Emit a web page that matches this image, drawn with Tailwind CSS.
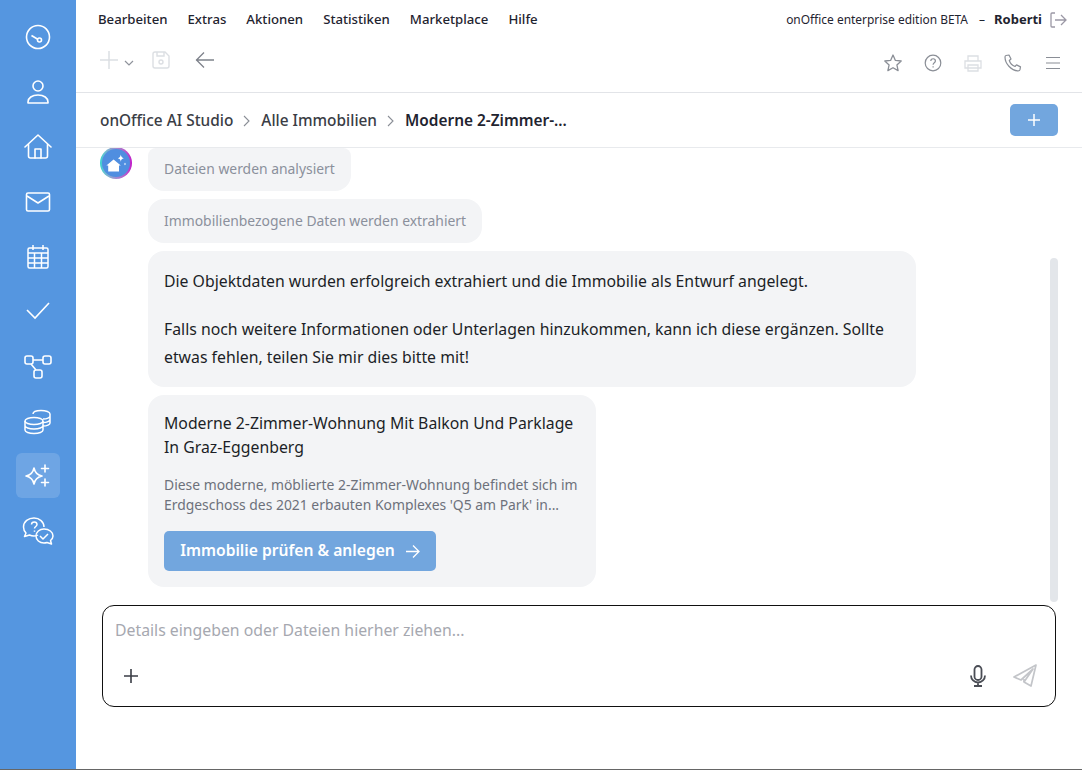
<!DOCTYPE html>
<html lang="de">
<head>
  <meta charset="UTF-8">
  <meta name="viewport" content="width=device-width, initial-scale=1.0">
  <title>onOffice AI Studio</title>
  <script src="https://cdn.jsdelivr.net/npm/@tailwindcss/browser@4"></script>
</head>
<body class="bg-white font-['Noto_Sans',sans-serif] text-[#1f2430] overflow-hidden">
  <div class="flex h-[770px] w-[1082px] border-b border-[#666]">
    <!-- sidebar -->
    <nav class="w-[76px] shrink-0 bg-[#5596e0] flex flex-col items-center pt-[15px] text-white">
      <div class="w-11 h-11 flex items-center justify-center mb-[11px]">
        <svg class="w-7 h-7" viewBox="0 0 28 28" fill="none" stroke="currentColor" stroke-width="1.6"><circle cx="14" cy="14" r="11.5"/><circle cx="15.5" cy="17" r="2"/><path d="M13.7 16.2 7.5 12.5"/></svg>
      </div>
      <div class="w-11 h-11 flex items-center justify-center mb-[11px]">
        <svg class="w-7 h-7" viewBox="0 0 28 28" fill="none" stroke="currentColor" stroke-width="1.6"><circle cx="14" cy="8" r="5"/><path d="M4 25v-1c0-4 4-7 10-7s10 3 10 7v1z" stroke-linejoin="round"/></svg>
      </div>
      <div class="w-11 h-11 flex items-center justify-center mb-[11px]">
        <svg class="w-7 h-7" viewBox="0 0 28 28" fill="none" stroke="currentColor" stroke-width="1.6" stroke-linejoin="round" stroke-linecap="round"><path d="M1 14 14 2l13 12"/><path d="M4.500 11.500V23a2 2 0 0 0 2 2h15a2 2 0 0 0 2-2V11.500"/><path d="M11 25v-9h6v9"/></svg>
      </div>
      <div class="w-11 h-11 flex items-center justify-center mb-[11px]">
        <svg class="w-7 h-7" viewBox="0 0 28 28" fill="none" stroke="currentColor" stroke-width="1.6" stroke-linejoin="round"><rect x="2.500" y="5" width="23" height="18" rx="1.500"/><path d="m3 8 11 7 11-7"/></svg>
      </div>
      <div class="w-11 h-11 flex items-center justify-center mb-[11px]">
        <svg class="w-7 h-7" viewBox="0 0 28 28" fill="none" stroke="currentColor" stroke-width="1.5"><rect x="4" y="5" width="20" height="20" rx="1.500"/><path d="M9 2v5M19 2v5M4 10h20M4 15h20M4 20h20M10.500 10v15M17.500 10v15"/></svg>
      </div>
      <div class="w-11 h-11 flex items-center justify-center mb-[11px]">
        <svg class="w-7 h-7" viewBox="0 0 28 28" fill="none" stroke="currentColor" stroke-width="1.6"><path d="m3 12 8 8L25 5"/></svg>
      </div>
      <div class="w-11 h-11 flex items-center justify-center mb-[11px]">
        <svg class="w-8 h-8" viewBox="0 0 32 32" fill="none" stroke="currentColor" stroke-width="1.6"><rect x="3" y="5" width="8" height="8" rx="2"/><rect x="21" y="5" width="8" height="8" rx="2"/><rect x="12" y="19" width="8" height="8" rx="2"/><path d="M11 9h10M9 13l5 6"/></svg>
      </div>
      <div class="w-11 h-11 flex items-center justify-center mb-[9px]">
        <svg class="w-8 h-8" viewBox="0 0 32 32" fill="none" stroke="currentColor" stroke-width="1.500"><ellipse cx="12" cy="15" rx="9" ry="3.500"/><path d="M3 15v9c0 2 4 3.500 9 3.500s9-1.500 9-3.500v-9M3 19.500c0 2 4 3.500 9 3.500s9-1.500 9-3.500"/><path d="M11 8c0-2 3-3.500 8-3.500S28 6 28 8v9c0 1.500-3 3-7 3M21 13c4 0 7-1.500 7-3M21 16.500c4 0 7-1.500 7-3"/></svg>
      </div>
      <div class="w-11 h-[45px] flex items-center justify-center mb-[11px] rounded-md bg-white/15">
        <svg class="w-7 h-7" viewBox="0 0 28 28" fill="none" stroke="currentColor" stroke-width="1.6" stroke-linejoin="round" stroke-linecap="round"><path d="M10 8c1 5 3 7 8 8-5 1-7 3-8 8-1-5-3-7-8-8 5-1 7-3 8-8z" transform="translate(0 -2)"/><path d="M21 3v7M17.500 6.500h7M21 17v7M17.500 20.500h7"/></svg>
      </div>
      <div class="w-11 h-11 flex items-center justify-center">
        <svg class="w-8 h-8" viewBox="0 0 32 32" fill="none" stroke="currentColor" stroke-width="1.500" stroke-linejoin="round"><path d="M12 3C6.500 3 1.500 6.500 1.500 12c0 2.500 1 4.500 2.500 6l-1.500 3.500 5-1.500c1.500.7 3 1 4.500 1 2 0 3-.3 4-1"/><path d="M12 3c5.500 0 10 4 10 9"/><path d="M22 14c-4.500 0-8 3-8 7s3.500 7 8 7c1 0 2-.2 3-.5l4.500 1.500-1-3.500c1.500-1.200 2.500-3 2.500-4.500 0-4-4-7-9-7z"/><path d="m18 21 3 3 5-5M9.500 9.500c0-3.500 5.500-3.500 5.500 0 0 2-2.500 2-2.500 4M12.500 15.500v1.200"/></svg>
      </div>
    </nav>

    <div class="flex-1 min-w-0 flex flex-col">
      <!-- menu + toolbar -->
      <header class="h-[93px] shrink-0 border-b border-[#e2e4e8]">
        <div class="h-[39px] flex items-center pl-[22px] pr-[15px] text-[13.200px]">
          <div class="flex gap-5 font-medium">
            <span>Bearbeiten</span><span>Extras</span><span>Aktionen</span><span>Statistiken</span><span>Marketplace</span><span>Hilfe</span>
          </div>
          <div class="ml-auto flex items-center text-[12px]">
            <span class="text-[11.950px]">onOffice enterprise edition BETA</span>
            <span class="ml-[11px] mr-[-1px]">–</span>
            <span class="ml-[10px] text-[13px] font-bold">Roberti</span>
            <svg class="w-[18px] h-[18px] ml-[7px] text-[#9b98a5]" viewBox="0 0 18 18" fill="none" stroke="currentColor" stroke-width="1.300"><path d="M6 2H3a1 1 0 0 0-1 1v12a1 1 0 0 0 1 1h3M6 9h11M12 4l5 5-5 5"/></svg>
          </div>
        </div>
        <div class="h-[53px] flex items-start pl-[24px] pr-[19px]">
          <svg class="w-5 h-5 mt-[11px] text-[#dcdfe3]" viewBox="0 0 20 20" fill="none" stroke="currentColor" stroke-width="1.500"><path d="M9 1v18M0 10h18"/></svg>
          <svg class="w-[10px] h-[10px] mt-[19px] ml-[4px] text-[#8f939b]" viewBox="0 0 10 10" fill="none" stroke="currentColor" stroke-width="1.200"><path d="m1 3 4 4 4-4"/></svg>
          <svg class="w-5 h-5 mt-[11px] ml-[17px] text-[#dcdfe3]" viewBox="0 0 20 20" fill="none" stroke="currentColor" stroke-width="1.400"><path d="M2 4a2 2 0 0 1 2-2h10l4 4v10a2 2 0 0 1-2 2H4a2 2 0 0 1-2-2z"/><path d="M6 2v4h7V2"/><circle cx="10" cy="12" r="2"/></svg>
          <svg class="w-5 h-5 mt-[11px] ml-[24px] text-[#7e828b]" viewBox="0 0 20 20" fill="none" stroke="currentColor" stroke-width="1.300"><path d="M1 10h18M9 2.500 1.500 10 9 17.500"/></svg>
          <div class="ml-auto flex items-center gap-5 mt-[14px] text-[#8a8e96]">
            <svg class="w-5 h-5" viewBox="0 0 20 20" fill="none" stroke="currentColor" stroke-width="1.300" stroke-linejoin="round"><path d="m10 2 2.400 5.400 5.800.6-4.300 3.900 1.200 5.700L10 14.700l-5.100 2.900 1.200-5.700L1.800 8l5.800-.6z"/></svg>
            <svg class="w-5 h-5" viewBox="0 0 20 20" fill="none" stroke="currentColor" stroke-width="1.200"><circle cx="10" cy="10" r="7.800"/><path d="M7.800 8c0-3 4.600-3 4.600 0 0 1.800-2.300 1.700-2.300 3.700M10.100 13.300v1.200"/></svg>
            <svg class="w-5 h-5 text-[#dcdfe3]" viewBox="0 0 20 20" fill="none" stroke="currentColor" stroke-width="1.300"><path d="M5 8V3h10v5M2 8h16v7H2zM5 12h10v6H5z"/></svg>
            <svg class="w-5 h-5" viewBox="0 0 20 20" fill="none" stroke="currentColor" stroke-width="1.200" stroke-linejoin="round"><path d="M3 2.500 6 2l2 4-1.700 1.500c.8 2.500 3 5 5.700 6l1.500-1.600 4 2-.6 3c-.2.700-1 1-1.700 1C8 17.500 2 10.500 2 4c0-.7.300-1.300 1-1.500z"/></svg>
            <svg class="w-5 h-5" viewBox="0 0 20 20" fill="none" stroke="currentColor" stroke-width="1.200"><path d="M3 4.500h14M3 10h14M3 15.500h14"/></svg>
          </div>
        </div>
      </header>

      <!-- breadcrumb -->
      <div class="h-[55px] shrink-0 border-b border-[#e8eaed] flex items-center pl-[24px] pr-[24px] pt-[2px] text-[15.400px] font-medium text-[#3a3d45]">
        <span>onOffice AI Studio</span>
        <svg class="w-[10px] h-3 mx-[9px] text-[#8a8e96]" viewBox="0 0 10 12" fill="none" stroke="currentColor" stroke-width="1.100"><path d="m2 1 5 5-5 5"/></svg>
        <span>Alle Immobilien</span>
        <svg class="w-[10px] h-3 mx-[9px] text-[#8a8e96]" viewBox="0 0 10 12" fill="none" stroke="currentColor" stroke-width="1.100"><path d="m2 1 5 5-5 5"/></svg>
        <span class="font-semibold text-[#1f2430]">Moderne 2-Zimmer-...</span>
        <button class="ml-auto -mt-[2px] w-12 h-8 rounded-[5px] bg-[#72a6de] flex items-center justify-center text-white">
          <svg class="w-[14px] h-[14px]" viewBox="0 0 14 14" fill="none" stroke="currentColor" stroke-width="1.500"><path d="M7 1v12M1 7h12"/></svg>
        </button>
      </div>

      <!-- chat -->
      <main class="relative h-[457px] shrink-0 overflow-hidden">
        <div class="absolute right-[24px] top-[110px] w-2 h-[344px] rounded bg-[#e3e6ea]"></div>
        <div class="flex pl-[24px] gap-4">
          <div class="w-8 h-8 shrink-0 -mt-[1px] rounded-full bg-gradient-to-r from-[#2fd4d0] to-[#c010c8] p-[2px]">
            <div class="w-full h-full rounded-full bg-[#4f8ee0] flex items-center justify-center">
              <svg class="w-6 h-6 text-white" viewBox="0 0 20 20" fill="currentColor"><path d="M8 7 2 12h1.500v5h9v-5H14z"/><path d="M14 3c.3 2 1 2.700 2.500 3-1.500.3-2.200 1-2.500 3-.3-2-1-2.700-2.500-3 1.500-.3 2.200-1 2.500-3z"/><path d="M17.500 9.500c.1.800.4 1.100 1 1.300-.6.200-.9.500-1 1.300-.1-.8-.4-1.100-1-1.300.6-.2.900-.5 1-1.300z"/></svg>
            </div>
          </div>
          <div class="flex flex-col items-start gap-2 text-[#1c1f27]">
            <div class="h-[43px] px-4 flex items-center rounded-b-2xl rounded-t-lg bg-[#f3f4f6] text-[13.900px] text-[#8b909c]">Dateien werden analysiert</div>
            <div class="h-[44px] px-4 flex items-center rounded-2xl bg-[#f3f4f6] text-[13.900px] text-[#8b909c]">Immobilienbezogene Daten werden extrahiert</div>
            <div class="w-[768px] h-[136px] px-4 pt-4 rounded-2xl bg-[#f3f4f6] text-[15.800px] leading-[28px]">
              <p>Die Objektdaten wurden erfolgreich extrahiert und die Immobilie als Entwurf angelegt.</p>
              <p class="mt-5">Falls noch weitere Informationen oder Unterlagen hinzukommen, kann ich diese ergänzen. Sollte etwas fehlen, teilen Sie mir dies bitte mit!</p>
            </div>
            <div class="w-[448px] h-[192px] px-4 pt-4 rounded-2xl bg-[#f3f4f6]">
              <p class="text-[15.800px] leading-[24px]">Moderne 2-Zimmer-Wohnung Mit Balkon Und Parklage In Graz-Eggenberg</p>
              <p class="mt-4 text-[13.900px] leading-[20px] text-[#6d717b]">Diese moderne, möblierte 2-Zimmer-Wohnung befindet sich im Erdgeschoss des 2021 erbauten Komplexes 'Q5 am Park' in...</p>
              <button class="mt-4 w-[272px] h-10 rounded-[5px] bg-[#72a6de] flex items-center justify-center gap-[10px] text-white text-[15.650px] font-semibold">
                Immobilie prüfen &amp; anlegen
                <svg class="w-[15px] h-[15px]" viewBox="0 0 15 15" fill="none" stroke="currentColor" stroke-width="1.300"><path d="M1 7.500h13M8 1.500l6 6-6 6"/></svg>
              </button>
            </div>
          </div>
        </div>
      </main>

      <!-- input -->
      <div class="ml-[26px] w-[954px] h-[102px] shrink-0 rounded-xl border border-[#111] px-3 pt-3 flex flex-col">
        <div class="text-[15.800px] text-[#a6a8b0] leading-[24px]">Details eingeben oder Dateien hierher ziehen...</div>
        <div class="flex items-center mt-[21px] pl-[8px] pr-[5px]">
          <svg class="w-4 h-4 text-[#3a3d45]" viewBox="0 0 16 16" fill="none" stroke="currentColor" stroke-width="1.600"><path d="M8 1v14M1 8h14"/></svg>
          <svg class="w-6 h-6 ml-auto text-[#4a4d55]" viewBox="0 0 24 24" fill="none" stroke="currentColor" stroke-width="1.800"><rect x="8.500" y="2" width="7" height="14" rx="3.500"/><path d="M5 11.500a7 7 0 0 0 14 0M12 18.500V22M8 22h8"/></svg>
          <svg class="w-[26px] h-[26px] ml-[22px] text-[#c3c5c9]" viewBox="0 0 26 26" fill="none" stroke="currentColor" stroke-width="1.700" stroke-linejoin="round"><path d="M24 2 2 14l7 3 12-11-9 13 7 4z"/><path d="M12 19v-3"/></svg>
        </div>
      </div>
    </div>
  </div>
</body>
</html>
